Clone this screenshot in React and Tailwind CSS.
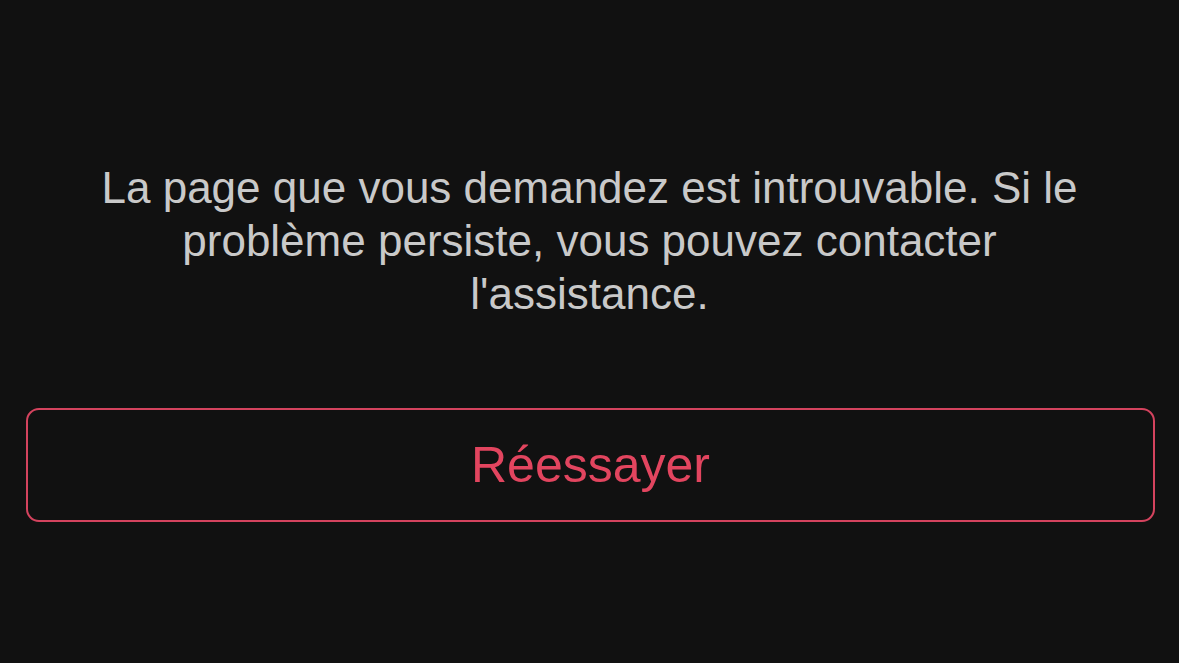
export default function App() {
  return (
    <div
      className="w-[1179px] h-[663px] bg-[#111111] flex flex-col items-center overflow-hidden"
      style={{ fontFamily: '"Liberation Sans", Arial, sans-serif' }}
    >
      <p className="mt-[161px] max-w-[1040px] text-center text-[44px] leading-[53px] text-[#c9c9c9]">
        La page que vous demandez est introuvable. Si le problème persiste, vous pouvez contacter l'assistance.
      </p>
      <div className="w-full pl-[26px] pr-[24px] mt-[88px]">
        <button className="w-full h-[114px] rounded-[13px] border-2 border-[#d4435e] flex items-center justify-center text-[50px] text-[#e2455f]">
          Réessayer
        </button>
      </div>
    </div>
  );
}
